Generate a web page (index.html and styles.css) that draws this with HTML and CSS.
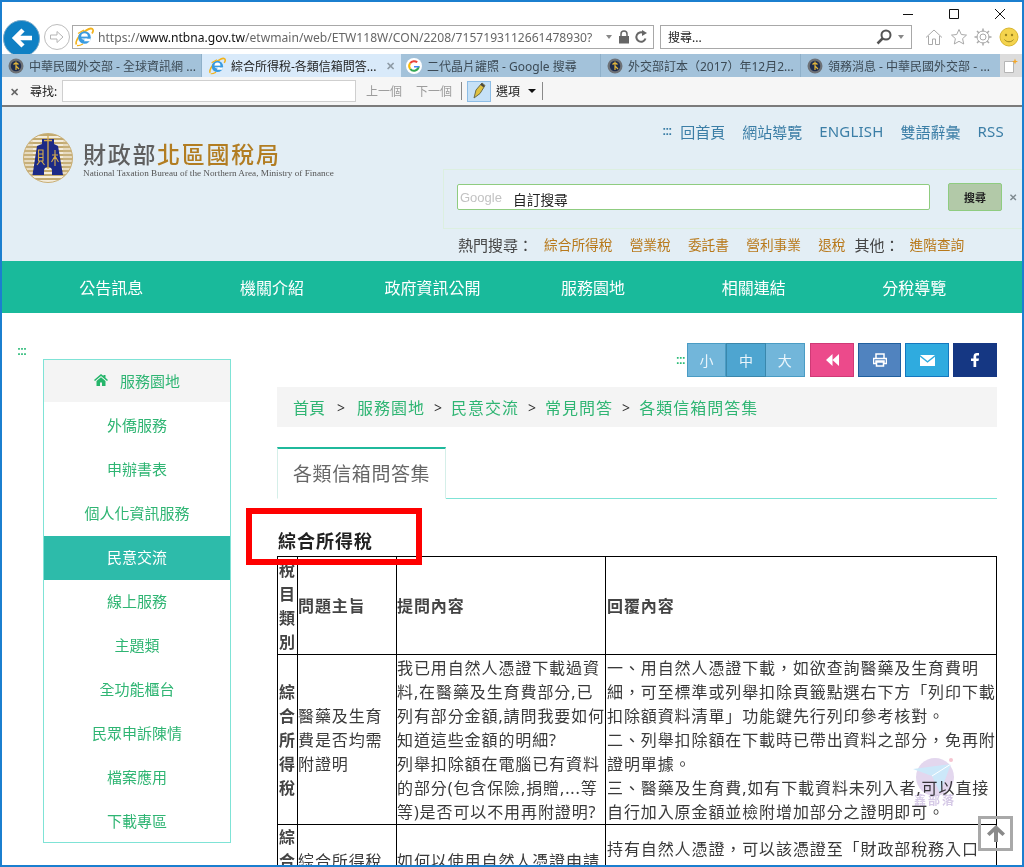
FILE: index.html
```html
<!DOCTYPE html>
<html lang="zh-Hant">
<head>
<meta charset="utf-8">
<title>綜合所得稅-各類信箱問答集</title>
<link rel="stylesheet" href="styles.css">
</head>
<body>
<svg class="defs" width="0" height="0" aria-hidden="true">
  <defs>
    <symbol id="ie" viewBox="0 0 20 20">
      <path d="M2.5 17.5C1 15.5 4 9 9 5.5s7.500-5 9.500-3.500c1 1 .5 3-.5 4.500" fill="none" stroke="#f2b21b" stroke-width="1.700"/>
      <circle cx="10.500" cy="10.500" r="6.300" fill="#3a9be0"/>
      <circle cx="10.500" cy="9.500" r="3.300" fill="#fff"/>
      <rect x="6.500" y="9.600" width="8.500" height="1.900" fill="#3a9be0"/>
      <path d="M11 11.800h5.800l-1 2.500H10z" fill="#fff"/>
      <path d="M4 6.500 10 3M3 18.500c2 .5 4-.5 6-1.500" fill="none" stroke="#f2b21b" stroke-width="1.300"/>
    </symbol>
    <symbol id="roc" viewBox="0 0 16 16">
      <circle cx="8" cy="8" r="7.500" fill="#6d7176"/>
      <circle cx="8" cy="8" r="5.200" fill="#1f2d4d"/>
      <path d="M8 3.500V12M5.500 6.500C7 5 9 5 10.500 6.500M8 8l3 3" fill="none" stroke="#e0b43c" stroke-width="1.200"/>
    </symbol>
  </defs>
</svg>
<div class="window">
  <div class="titlebar">
    <span class="winbtn"><svg width="12" height="12" viewBox="0 0 12 12"><path d="M1 6.500h10" stroke="#111" fill="none"/></svg></span>
    <span class="winbtn"><svg width="12" height="12" viewBox="0 0 12 12"><path d="M1.500 1.500h9v9h-9z" stroke="#111" fill="none"/></svg></span>
    <span class="winbtn"><svg width="12" height="12" viewBox="0 0 12 12"><path d="M1 1l10 10M11 1 1 11" stroke="#111" fill="none"/></svg></span>
  </div>
  <div class="navrow">
    <span class="back"><svg width="24" height="24" viewBox="0 0 24 24"><path d="M22 12H6M13 4l-8 8 8 8" fill="none" stroke="#fff" stroke-width="4.500"/></svg></span>
    <span class="forward"><svg width="16" height="16" viewBox="0 0 16 16"><path d="M1.500 6h6.500V2.500L14 8l-6 5.500V10H1.500z" fill="none" stroke="#b5b5b5"/></svg></span>
    <div class="address">
      <svg class="ie-icon" width="20" height="20"><use href="#ie"/></svg>
      <span class="url"><span class="url-dim">https://</span>www.ntbna.gov.tw<span class="url-dim">/etwmain/web/ETW118W/CON/2208/7157193112661478930?</span></span>
      <span class="caret-gray"></span>
      <svg width="12" height="14" viewBox="0 0 12 14"><path d="M3 6V4a3 3 0 0 1 6 0v2" fill="none" stroke="#666" stroke-width="1.500"/><rect x="1" y="6" width="10" height="7.500" fill="#666"/></svg>
      <svg width="14" height="14" viewBox="0 0 14 14"><path d="M11.500 8.500A4.700 4.700 0 1 1 9.500 3" fill="none" stroke="#666" stroke-width="2"/><path d="M8 0l5 3-5 3z" fill="#666"/></svg>
    </div>
    <div class="searchbar">
      <span class="searchbar-text">搜尋...</span>
      <svg width="16" height="16" viewBox="0 0 16 16"><circle cx="10" cy="6" r="4.500" fill="none" stroke="#555" stroke-width="2"/><path d="M6.500 9.500 1.500 14.500" stroke="#555" stroke-width="2.500"/></svg>
      <span class="caret-gray"></span>
    </div>
    <div class="tools">
      <svg width="18" height="18" viewBox="0 0 18 18"><path d="M1 9.500 9 2l8 7.500M3.500 8v8.500h4V11h3v5.500h4V8" fill="none" stroke="#a9a9a9"/></svg>
      <svg width="18" height="18" viewBox="0 0 18 18"><path d="M9 1.500l2.300 5 5.200.6-3.900 3.500 1.100 5.400L9 13.300 4.300 16l1.100-5.400L1.500 7.100l5.200-.6z" fill="none" stroke="#a9a9a9"/></svg>
      <svg width="18" height="18" viewBox="0 0 18 18"><circle cx="9" cy="9" r="3" fill="none" stroke="#a9a9a9"/><circle cx="9" cy="9" r="6" fill="none" stroke="#a9a9a9" stroke-width="1"/><path d="M9 .5v3M9 14.500v3M.5 9h3M14.500 9h3M3 3l2 2M13 13l2 2M15 3l-2 2M5 13l-2 2" stroke="#a9a9a9" stroke-width="1.500"/></svg>
      <svg width="20" height="20" viewBox="0 0 20 20"><circle cx="10" cy="10" r="9" fill="#f4d34d" stroke="#d8b52e"/><circle cx="7" cy="8" r="1.200" fill="#9a8420"/><circle cx="13" cy="8" r="1.200" fill="#9a8420"/><path d="M5.500 12.500c2 3 7 3 9 0" fill="none" stroke="#9a8420"/></svg>
    </div>
  </div>
  <div class="tabs">
    <div class="tab tab-a"><svg width="16" height="16"><use href="#roc"/></svg><span class="tab-text">中華民國外交部 - 全球資訊網 ...</span></div>
    <div class="tab tab-b tab-current"><svg width="18" height="18"><use href="#ie"/></svg><span class="tab-text">綜合所得稅-各類信箱問答...</span><span class="tab-close">✕</span></div>
    <div class="tab tab-c"><svg width="16" height="16" viewBox="0 0 16 16"><circle cx="8" cy="8" r="8" fill="#fff"/><path d="M12.800 8.300a4.800 4.800 0 0 1-8.600 2.600" fill="none" stroke="#34a853" stroke-width="2"/><path d="M4.200 10.900a4.800 4.800 0 0 1 0-5.800" fill="none" stroke="#fbbc05" stroke-width="2"/><path d="M4.200 5.100a4.800 4.800 0 0 1 7-.8" fill="none" stroke="#ea4335" stroke-width="2"/><path d="M8 8h5v1.500H8z" fill="#4285f4"/></svg><span class="tab-text">二代晶片讙照 - Google 搜尋</span></div>
    <div class="tab tab-d"><svg width="16" height="16"><use href="#roc"/></svg><span class="tab-text">外交部訂本（2017）年12月2...</span></div>
    <div class="tab tab-e"><svg width="16" height="16"><use href="#roc"/></svg><span class="tab-text">領務消息 - 中華民國外交部 - ...</span></div>
    <div class="tab-new"><svg width="16" height="16" viewBox="0 0 16 16"><path d="M1.500 3.500h9v11h-9z" fill="#fff" stroke="#b5b5b5"/><path d="M12 .5l.8 2.200 2.200.8-2.200.8-.8 2.200-.8-2.200-2.200-.8 2.200-.8z" fill="#f5a623"/></svg></div>
  </div>
  <div class="findbar">
    <span class="find-x">✕</span>
    <span class="find-label">尋找:</span>
    <span class="find-input"></span>
    <span class="find-nav find-prev">上一個</span>
    <span class="find-nav find-next">下一個</span>
    <span class="find-sep"></span>
    <span class="find-pen"><svg width="20" height="20" viewBox="0 0 20 20"><path d="M5 17 7 9l6-7 3 2.500-5 8z" fill="#e0c240" stroke="#6b6b4a"/><path d="M12 3l3 2.500" stroke="#444" stroke-width="2"/></svg></span>
    <span class="find-opt">選項</span>
    <span class="caret-dark"></span>
    <span class="find-sep find-sep-end"></span>
  </div>

  <div class="page">
    <header class="site-header">
      <div class="brand">
        <svg class="emblem" width="50" height="50" viewBox="0 0 50 50">
          <defs><clipPath id="emblem-c"><circle cx="25" cy="25" r="24.500"/></clipPath></defs>
          <g clip-path="url(#emblem-c)">
            <rect width="50" height="50" fill="#f3ecdc"/>
            <path d="M0 2h50M0 6h50M0 10h50M0 14h50M0 18h50M0 22h50M0 26h50M0 30h50M0 34h50M0 38h50M0 42h50M0 46h50" stroke="#c2aa70" stroke-width="1.800"/>
            <path d="M0 0h10v50H0zM40 0h10v50H40z" fill="#d2bd8c" opacity=".35"/>
            <path d="M19 6h12v5l4 2 5 29H29v-4a4 4 0 0 0-8 0v4H9.500l4.500-29 5-2z" fill="#1c2a86"/>
            <path d="M25 3v33M21 7.500h8" stroke="#d6ac4d" stroke-width="1.300" fill="none"/>
            <path d="M15.500 17h4.500v11h-4.500zM15.500 21h4.500M15.500 24.500h4.500M14 32l3-4M21.500 32l-3-4M29 22h6M32 17v16M32 23l-3.500 6M32 23l3.500 6" stroke="#d6ac4d" stroke-width="1.100" fill="none"/>
          </g>
          <circle cx="25" cy="25" r="24.500" fill="none" stroke="#c9ae74"/>
        </svg>
        <div class="brand-text">
          <div class="brand-cn"><span class="brand-gray">財政部</span><span class="brand-gold">北區國稅局</span></div>
          <div class="brand-en">National Taxation Bureau of the Northern Area, Ministry of Finance</div>
        </div>
      </div>
      <div class="header-right">
        <nav class="toplinks">
          <span class="dots dots-blue">:::</span>
          <a class="toplink toplink-home">回首頁</a>
          <a class="toplink">網站導覽</a>
          <a class="toplink toplink-latin">ENGLISH</a>
          <a class="toplink">雙語辭彙</a>
          <a class="toplink toplink-latin">RSS</a>
        </nav>
        <div class="gsearch">
          <div class="gsearch-box"><span class="google-mark">Google</span><span class="gsearch-text">自訂搜尋</span></div>
          <span class="gsearch-btn">搜尋</span>
          <span class="gsearch-x">✕</span>
        </div>
        <div class="hot">
          <span class="hot-label">熱門搜尋：</span>
          <a class="hot-link">綜合所得稅</a>
          <a class="hot-link">營業稅</a>
          <a class="hot-link">委託書</a>
          <a class="hot-link">營利事業</a>
          <a class="hot-link">退稅</a>
          <span class="hot-label hot-other">其他：</span>
          <a class="hot-link">進階查詢</a>
        </div>
      </div>
    </header>
    <nav class="mainnav">
      <a>公告訊息</a><a>機關介紹</a><a>政府資訊公開</a><a>服務園地</a><a>相關連結</a><a>分稅導覽</a>
    </nav>
    <main class="content">
      <aside class="sidebar">
        <span class="dots dots-green side-dots">:::</span>
        <ul class="sidemenu">
          <li class="side-head"><svg width="14" height="12" viewBox="0 0 14 12"><path d="M7 0 0 6l1 1 6-5 6 5 1-1-2.500-2.200V1h-2v1z" fill="#25b56a"/><path d="M2.500 7 7 3.200 11.500 7v5H8V8.500H6V12H2.500z" fill="#25b56a"/></svg>服務園地</li>
          <li>外僑服務</li>
          <li>申辦書表</li>
          <li>個人化資訊服務</li>
          <li class="side-active">民意交流</li>
          <li>線上服務</li>
          <li>主題類</li>
          <li>全功能櫃台</li>
          <li>民眾申訴陳情</li>
          <li>檔案應用</li>
          <li>下載專區</li>
        </ul>
      </aside>
      <section class="main">
        <div class="actions">
          <span class="dots dots-green">:::</span>
          <div class="sizes">
            <span class="size">小</span><span class="size size-on">中</span><span class="size">大</span>
          </div>
          <span class="act act-back"><svg width="13" height="12" viewBox="0 0 13 12"><path d="M6.500 0v12L0 6zM13 0v12L6.500 6z" fill="#fff"/></svg></span>
          <span class="act act-print"><svg width="14" height="14" viewBox="0 0 14 14"><path d="M3 5V1h8v4M0.500 5.500h13v5H11V8H3v2.500H.5zM3.500 9h7v4h-7z" fill="none" stroke="#fff" stroke-width="1.500"/></svg></span>
          <span class="act act-mail"><svg width="15" height="11" viewBox="0 0 15 11"><path d="M0 0h15L7.500 6z" fill="#fff"/><path d="M0 1.800 7.500 7.800 15 1.800V11H0z" fill="#fff"/></svg></span>
          <span class="act act-fb"><svg width="8" height="14" viewBox="0 0 8 14"><path d="M2.500 14V8H0V5.500h2.500V3.500C2.500 1 4 0 5.800 0H8v2.500H6.500c-1 0-1.300.5-1.300 1.300v1.700H8L7.500 8H5.200v6z" fill="#fff"/></svg></span>
        </div>
        <div class="crumbs">
          <a class="crumb-first">首頁</a><span class="sep sep-first">&gt;</span><a>服務園地</a><span class="sep">&gt;</span><a>民意交流</a><span class="sep">&gt;</span><a>常見問答</a><span class="sep">&gt;</span><a>各類信箱問答集</a>
        </div>
        <div class="tabline"><h2 class="pagetab">各類信箱問答集</h2></div>
        <h3 class="qa-title">綜合所得稅</h3>
        <table class="qa">
          <colgroup><col class="c1"><col class="c2"><col class="c3"><col class="c4"></colgroup>
          <tr class="qa-head"><th>稅目類別</th><th>問題主旨</th><th>提問內容</th><th>回覆內容</th></tr>
          <tr class="qa-row1">
            <td class="qa-cat">綜合所得稅</td>
            <td>醫藥及生育費是否均需附證明</td>
            <td class="qa-lines">我已用自然人憑證下載過資<br>料,在醫藥及生育費部分,已<br>列有部分金額,請問我要如何<br>知道這些金額的明細?<br>列舉扣除額在電腦已有資料<br>的部分(包含保險,捐贈,...等<br>等)是否可以不用再附證明?</td>
            <td class="qa-lines">一、用自然人憑證下載，如欲查詢醫藥及生育費明<br>細，可至標準或列舉扣除頁籤點選右下方「列印下載<br>扣除額資料清單」功能鍵先行列印參考核對。<br>二、列舉扣除額在下載時已帶出資料之部分，免再附<br>證明單據。<br>三、醫藥及生育費,如有下載資料未列入者,可以直接<br>自行加入原金額並檢附增加部分之證明即可。</td>
          </tr>
          <tr>
            <td class="qa-cat">綜合所得稅</td>
            <td class="qa-lines">綜合所得稅<br>如何以自然<br>人憑證申請</td>
            <td class="qa-lines">如何以使用自然人憑證申請<br>綜合所得稅<br>相關資料?</td>
            <td class="qa-lines">持有自然人憑證，可以該憑證至「財政部稅務入口<br>網」查詢，<br>並依畫面指示<br>操作。</td>
          </tr>
        </table>
      </section>
    </main>
  </div>

  <div class="redmark"></div>
  <div class="watermark">
    <svg width="50" height="46" viewBox="0 0 50 46">
      <circle cx="22" cy="22" r="19" fill="#dccdea"/>
      <circle cx="38" cy="5" r="2" fill="#f3b6c4"/>
      <path d="M0 14 38 9 27 38 19 21z" fill="#bfe3f8"/>
      <path d="M19 21 38 9" stroke="#fff"/>
    </svg>
    <span class="watermark-text">鑫部落</span>
  </div>
  <div class="totop"><svg width="18" height="17" viewBox="0 0 18 17"><path d="M9 0 0 8.500l2.500 2.500L7 7v10h4V7l4.500 4L18 8.500z" fill="#8a8a8a"/></svg></div>
</div>
</body>
</html>
```

FILE: styles.css
```css
* { box-sizing: border-box; }
html, body { margin: 0; padding: 0; height: 100%; overflow: hidden; background: #fff; }
body { font-family: "Noto Sans", "Noto Sans CJK TC", sans-serif; text-spacing-trim: space-all; }
a { color: inherit; text-decoration: none; }
ul { list-style: none; margin: 0; padding: 0; }
h2, h3 { margin: 0; }
.defs { position: absolute; }

.window { position: relative; width: 1024px; height: 867px; overflow: hidden; border: 2px solid #1b7fcf; background: #fff; }

.titlebar { height: 18px; display: flex; justify-content: flex-end; align-items: flex-end; padding-right: 16px; gap: 34px; }
.winbtn { width: 12px; height: 12px; display: block; line-height: 0; }
.navrow { height: 34px; display: flex; align-items: center; position: relative; }
.back { width: 37px; height: 37px; border-radius: 50%; background: #0f80c4; border: 1px solid #7aa9c8; display: flex; align-items: center; justify-content: center; flex: none; margin: 2px 0 0 1px; }
.forward { width: 26px; height: 26px; border-radius: 50%; border: 1px solid #bdbdbd; display: flex; align-items: center; justify-content: center; flex: none; margin-left: 4px; background: #fff; }
.address { width: 582px; height: 24px; margin-left: 2px; border: 1px solid #a8a8a8; display: flex; align-items: center; padding-left: 1px; padding-right: 5px; gap: 4px; flex: none; }
.ie-icon { flex: none; }
.url { font-size: 12.100px; color: #111; white-space: nowrap; flex: 1; overflow: hidden; }
.url-dim { color: #666; }
.caret-gray { width: 0; height: 0; border: 3.500px solid transparent; border-top: 4px solid #888; border-bottom: 0; display: block; margin: 0 2px; }
.searchbar { width: 252px; height: 24px; margin-left: 6px; border: 1px solid #a8a8a8; display: flex; align-items: center; padding: 0 5px 0 7px; gap: 4px; flex: none; }
.searchbar-text { flex: 1; font-size: 12px; color: #222; }
.tools { display: flex; align-items: center; gap: 6.500px; margin-left: 13px; }

.tabs { height: 23px; display: flex; background: #a3c2da; position: relative; z-index: 1; }
.tab { display: flex; align-items: center; padding-left: 6px; gap: 5px; border-right: 1px solid #8fb0c9; font-size: 12px; color: #3c4a55; white-space: nowrap; overflow: hidden; flex: none; }
.tab-a { width: 200px; }
.tab-b { width: 199px; padding-left: 6px; }
.tab-c { width: 200px; padding-left: 5px; }
.tab-d { width: 200px; padding-left: 6px; }
.tab-e { width: 199px; padding-left: 6px; border-right: 0; }
.tab-current { background: #d9eafa; color: #222; border-right: 0; }
.tab-text { flex: 1; overflow: hidden; }
.tab-close { font-size: 11px; color: #8e9ba6; padding-right: 6px; font-weight: 700; }
.tab-new { flex: 1; background: #dcdcdc; display: flex; align-items: center; justify-content: center; }

.findbar { height: 30px; display: flex; align-items: center; background: #f6f6f6; border-bottom: 2px solid #7b7b7b; font-size: 12px; color: #222; }
.find-x { font-size: 11px; color: #666; font-weight: 700; width: 28px; padding-left: 8px; flex: none; }
.find-label { width: 32px; flex: none; }
.find-input { width: 294px; height: 22px; background: #fff; border: 1px solid #cfcfcf; flex: none; }
.find-nav { color: #9c9c9c; flex: none; }
.find-prev { margin-left: 10px; }
.find-next { margin-left: 14px; }
.find-sep { width: 1px; height: 18px; background: #8a8a8a; margin-left: 9px; flex: none; }
.find-pen { width: 24px; height: 21px; background: #c6e1f7; border: 1px solid #8dbde6; margin-left: 5px; display: flex; align-items: center; justify-content: center; flex: none; }
.find-opt { margin-left: 5px; flex: none; }
.caret-dark { width: 0; height: 0; border: 4px solid transparent; border-top: 4px solid #111; border-bottom: 0; margin-left: 8px; }
.find-sep-end { margin-left: 6px; }

.page { width: 100%; }
.site-header { height: 154px; background: #e3eef5; display: flex; justify-content: space-between; }
.brand { display: flex; align-items: center; padding-left: 21px; height: 102px; gap: 10px; }
.emblem { flex: none; }
.brand-text { padding-top: 2px; }
.brand-cn { font-family: "Noto Sans CJK TC", sans-serif; font-size: 23px; line-height: 26px; font-weight: 500; letter-spacing: 1.700px; white-space: nowrap; margin-bottom: 2px; }
.brand-gray { color: #5f5f5f; }
.brand-gold { color: #b27d22; }
.brand-en { font-family: "Liberation Serif", serif; font-size: 9.200px; color: #555; line-height: 11px; white-space: nowrap; }

.header-right { width: 566px; position: relative; }
.toplinks { display: flex; justify-content: flex-end; align-items: center; gap: 17px; height: 20px; margin-top: 14px; padding-right: 18px; font-size: 15px; color: #3b7ea6; }
.toplink-home { margin-left: -8px; }
.toplink-latin { letter-spacing: .2px; }
.dots { font-family: "Liberation Sans", sans-serif; font-weight: 700; font-size: 12px; letter-spacing: -1px; line-height: 1; white-space: nowrap; }
.dots-blue { color: #3b7ea6; }
.dots-green { color: #2dbb78; }
.gsearch { display: flex; align-items: flex-start; margin: 42px 0 0 1px; height: 32px; outline: 1px solid #dcefe0; outline-offset: 13px; }
.gsearch-box { width: 473px; height: 26px; margin-top: 1px; border: 1px solid #8fcc80; border-radius: 2px; background: #fff; display: flex; align-items: center; font-size: 13.700px; color: #222; }
.google-mark { font-family: "Liberation Sans", sans-serif; font-size: 13px; color: #c2c2c2; padding-left: 2px; width: 55px; flex: none; }
.gsearch-text { padding-top: 3px; }
.gsearch-btn { width: 54px; height: 28px; background: #b2c9a8; border: 1px solid #8fcc80; border-radius: 2px; font-size: 11px; font-weight: 700; color: #222; display: flex; align-items: center; justify-content: center; margin-left: 18px; flex: none; }
.gsearch-x { font-size: 10px; line-height: 28px; font-weight: 700; color: #7f8a90; margin-left: 7px; }
.hot { display: flex; align-items: center; margin: 19px 0 0 2px; height: 20px; white-space: nowrap; }
.hot-label { color: #444; font-size: 15px; }
.hot-link { color: #b8791b; font-size: 13.700px; margin-left: 17.200px; }
.hot-label + .hot-link { margin-left: 11px; }
.hot-other { margin-left: 9px; }
.hot-other + .hot-link { margin-left: 10px; }

.mainnav { height: 52px; background: #19ba9b; display: grid; grid-template-columns: repeat(6, 160.600px); padding-left: 29px; align-items: center; }
.mainnav a { color: #fff; font-size: 16px; text-align: center; }

.content { display: flex; align-items: flex-start; }
.sidebar { width: 275px; padding: 32px 0 0 15px; flex: none; }
.side-dots { display: block; height: 14px; }
.sidemenu { width: 188px; margin-left: 26px; border: 1px solid #7fe3d6; height: 484px; }
.sidemenu li { height: 44px; padding-bottom: 4px; display: flex; align-items: center; justify-content: center; gap: 12px; font-size: 15px; color: #2fb573; white-space: nowrap; }
.sidemenu .side-head { background: linear-gradient(#f4f4f4 42px, transparent 42px); }
.sidemenu .side-active { background: #2dbbaa; color: #fff; }

.main { width: 720px; flex: none; }
.actions { display: flex; justify-content: flex-end; align-items: center; height: 34px; margin-top: 30px; }
.actions .dots { margin-right: 2px; }
.sizes { display: flex; margin-right: 5px; }
.size { width: 39.400px; height: 34px; background: #72b6da; border: 1px solid #4a9cc4; color: #eaf5fb; font-size: 14px; display: flex; align-items: center; justify-content: center; }
.size + .size { border-left: 0; }
.size-on { background: #4ea5d0; border-color: #3a87ac; border-left: 1px solid #3a87ac !important; }
.act { width: 44px; height: 34px; display: flex; align-items: center; justify-content: center; margin-left: 4px; border: 1px solid transparent; }
.act-back { background: #ec4a8b; border-color: #cf3a76; margin-left: 0; }
.act-print { width: 43px; background: #5083bf; border-color: #205f9f; }
.act-mail { background: #2fabdf; border-color: #1478bf; }
.act-fb { background: #153783; border-color: #153783; }

.crumbs { height: 40px; margin-top: 10px; background: #f4f4f4; display: flex; align-items: center; padding-left: 16px; font-size: 16px; color: #2fb573; letter-spacing: 1px; white-space: nowrap; }
.crumb-first { letter-spacing: 0; }
.sep { color: #333; margin: 0 9px; font-size: 14px; letter-spacing: 0; }
.sep-first { margin: 0 12px; }

.tabline { margin-top: 20px; border-bottom: 1px solid #7fe3d6; height: 52px; }
.pagetab { display: inline-flex; align-items: center; height: 52px; padding: 0 15px 2px 15px; font-size: 19px; font-weight: 400; letter-spacing: .6px; color: #666; border: 1px solid #d5efe9; border-top: 2px solid #1fb99c; border-bottom: 1px solid #fff; background: #fff; }

.qa-title { margin: 29px 0 2px 0; padding-left: 1px; font-size: 18px; line-height: 26px; letter-spacing: 1px; font-weight: 700; color: #222; }
.qa { border-collapse: collapse; table-layout: fixed; width: 719px; font-size: 16px; line-height: 24px; letter-spacing: .9px; color: #3a3a3a; }
.c1 { width: 20px; } .c2 { width: 99px; } .c3 { width: 209px; } .c4 { width: 391px; }
.qa th, .qa td { border: 1px solid #000; padding: 0; text-align: left; font-weight: 400; }
.qa th:first-child, .qa td:first-child, .qa th:last-child, .qa td:last-child { padding-left: 1px; }
.qa th { font-weight: 700; color: #444; }
.qa-head th { height: 98px; }
.qa-cat { font-weight: 700 !important; color: #444; }
.qa-lines { white-space: nowrap; }
.qa-row1 td { height: 170px; }

.redmark { position: absolute; left: 244px; top: 506px; width: 176px; height: 57px; border: 6px solid #fe0000; pointer-events: none; }
.watermark { position: absolute; left: 911px; top: 753px; width: 50px; height: 52px; opacity: .8; mix-blend-mode: multiply; }
.watermark svg { display: block; }
.watermark-text { position: absolute; left: 1px; bottom: 0; font-size: 12px; line-height: 12px; font-weight: 700; color: #cbbbe0; letter-spacing: 2px; white-space: nowrap; }
.totop { position: absolute; left: 976px; top: 814px; width: 35px; height: 35px; border: 3px solid #a9a9a9; display: flex; align-items: center; justify-content: center; }
```
